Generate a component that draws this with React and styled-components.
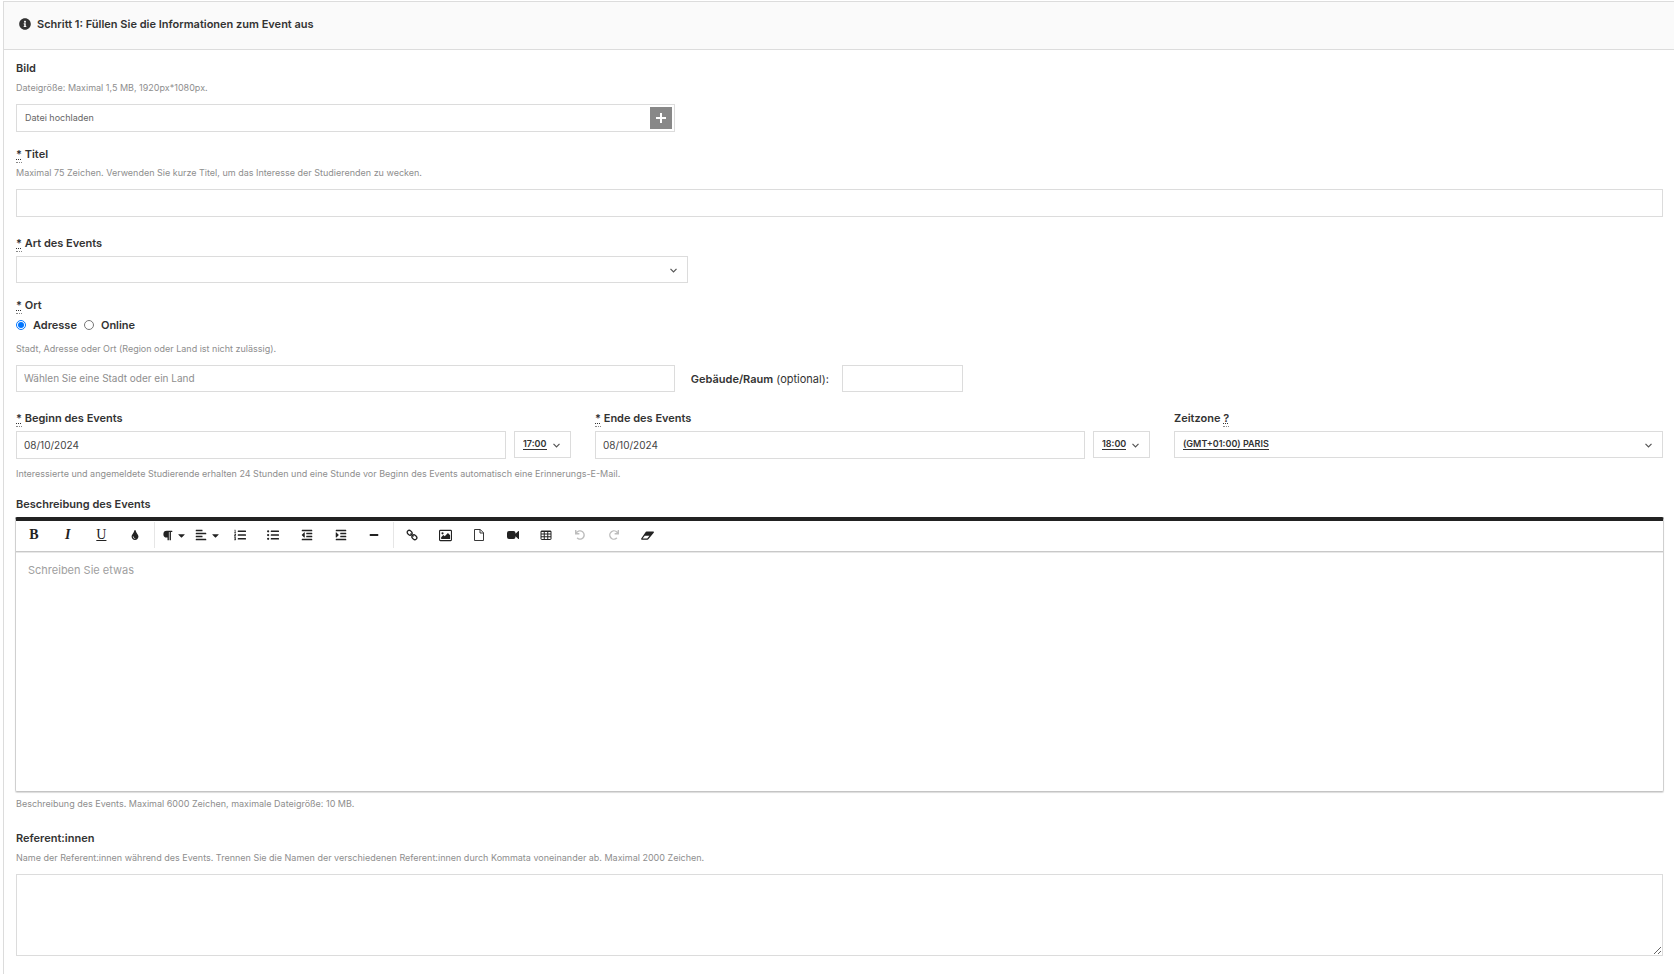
import React, { useRef, useState } from "react";
import styled, { createGlobalStyle, css } from "styled-components";
import {
  FaInfoCircle,
  FaTint,
  FaParagraph,
  FaAlignLeft,
  FaListOl,
  FaListUl,
  FaOutdent,
  FaIndent,
  FaMinus,
  FaUndo,
  FaRedo,
  FaCaretDown,
} from "react-icons/fa";

const GlobalStyle = createGlobalStyle`
  *, *::before, *::after {
    box-sizing: border-box;
  }

  body {
    margin: 0;
    background: #fff;
    color: #333;
    font-family: Inter, "Liberation Sans", sans-serif;
    font-size: 11px;
    line-height: 20px;
  }

  input, select, textarea, button {
    font-family: inherit;
    margin: 0;
  }
`;

const Panel = styled.form`
  min-height: calc(100vh - 1px);
  margin: 1px 0 0 3px;
  border: solid #dcdcdc;
  border-width: 1px 0 0 1px;
`;

const PanelHeader = styled.header`
  display: flex;
  align-items: center;
  gap: 6px;
  padding: 12px 15px 15px;
  background: #fafafa;
  border-bottom: 1px solid #dcdcdc;
`;

const PanelTitle = styled.h1`
  margin: 0;
  font-size: 11px;
  font-weight: 600;
  line-height: 20px;
`;

const PanelBody = styled.div`
  padding: 8px 11px 16px 12px;
`;

const Field = styled.div`
  min-width: 0;
  margin-bottom: ${({ $gap }) => $gap || 16}px;
`;

const labelText = css`
  display: block;
  font-size: 11px;
  font-weight: 600;
  line-height: 20px;
`;

const Label = styled.label`
  ${labelText}
  margin-bottom: ${({ $space }) => $space || 3}px;
`;

const Legend = styled.legend`
  ${labelText}
  padding: 0;
`;

const Abbr = styled.abbr`
  padding-bottom: 1px;
  border-bottom: 1px dotted #888;
  text-decoration: underline dotted 1px;
  text-underline-offset: 1px;
`;

const Hint = styled.p`
  margin: 0;
  color: #8e8e8e;
  font-size: 9px;
  line-height: 16px;
`;

const control = css`
  display: block;
  width: 100%;
  border: 1px solid #dcdcdc;
  border-radius: 0;
  background: #fff;
  color: #444;
  outline: none;

  &:focus {
    border-color: #999;
  }
`;

const TextInput = styled.input`
  ${control}
  height: ${({ $low }) => ($low ? 27 : 28)}px;
  padding: 0 7px 1px;
  font-size: 10px;

  &::placeholder {
    color: #8e8e8e;
    opacity: 1;
  }
`;

const TextArea = styled.textarea`
  ${control}
  height: 82px;
  padding: 7px;
  font-size: 10px;
  resize: vertical;
`;

const Upload = styled.div`
  position: relative;
  display: flex;
  align-items: center;
  width: 40%;
  height: 28px;
  padding: 0 2px 0 8px;
  border: 1px solid #dcdcdc;
`;

const UploadName = styled.label`
  flex: 1;
  color: #666;
  font-size: 9px;
  cursor: pointer;
`;

const FileInput = styled.input`
  position: absolute;
  width: 1px;
  height: 1px;
  opacity: 0;
  pointer-events: none;
`;

const AddButton = styled.button`
  display: flex;
  align-items: center;
  justify-content: center;
  width: 22px;
  height: 22px;
  padding: 0;
  border: 0;
  background: #888;
  color: #fff;
  cursor: pointer;
`;

const SelectBox = styled.div`
  position: relative;
  width: ${({ $width }) => $width || "100%"};
`;

// browsers skip text-decoration on a closed select, so the underline is a background
const Select = styled.select`
  ${control}
  appearance: none;
  height: 27px;
  padding: 0 18px 2px 8px;
  color: #333;
  font-size: 9px;
  font-weight: 600;
  background: linear-gradient(#333, #333) 8px 17px / ${({ $underline }) => $underline || 0}px 1px no-repeat #fff;
`;

const SelectArrow = styled.svg`
  position: absolute;
  right: 11px;
  top: 12px;
  pointer-events: none;
`;

const RadioGroup = styled.fieldset`
  margin: 0;
  padding: 0;
  border: 0;
`;

const RadioRow = styled.div`
  display: flex;
  gap: 7px;
  margin-bottom: 6px;
`;

const RadioLabel = styled.label`
  display: flex;
  align-items: center;
  gap: 7px;
  font-weight: 600;
`;

const Radio = styled.input`
  width: 10px;
  height: 10px;
  accent-color: #0075ff;
`;

const ControlRow = styled.div`
  display: flex;
  align-items: center;
  margin-top: 8px;
`;

const PlaceBox = styled.div`
  width: 40%;
  margin-right: 16px;
`;

const RoomLabel = styled.label`
  margin-right: 13px;
  font-size: 11px;

  strong {
    font-weight: 600;
  }
`;

const RoomBox = styled.div`
  width: 121px;
`;

const DateRow = styled.div`
  display: grid;
  grid-template-columns: 555fr 555fr 489fr;
  gap: 24px;
  margin-bottom: 7px;
`;

const DateTime = styled.div`
  display: grid;
  grid-template-columns: 1fr 57px;
  gap: 8px;
`;

const Editor = styled.div`
  margin: 0 -1px 4px;
  border: 1px solid #d0d0d0;
  border-top: 4px solid #222;
  border-bottom-color: #c4c4c4;
  border-radius: 2px;
  box-shadow: 0 1px 1px rgba(0, 0, 0, 0.14);
`;

const Toolbar = styled.div`
  display: flex;
  align-items: center;
  height: 31px;
  padding-bottom: 2px;
  border-bottom: 1px solid #c8c8c8;
  box-shadow: 0 1px 0 #e8e8e8;
`;

const ToolGroup = styled.div`
  display: grid;
  grid-template-columns: repeat(${({ $count }) => $count}, 1fr);
  width: ${({ $width }) => $width}px;
  margin: 0 2px 0 1px;
`;

const Divider = styled.span`
  width: 1px;
  height: 26px;
  background: #e6e6e6;
`;

const Tool = styled.button`
  display: flex;
  align-items: center;
  justify-content: center;
  gap: 3px;
  height: 28px;
  padding: 0 0 0 ${({ $menu }) => ($menu ? 4 : 0)}px;
  border: 0;
  background: none;
  color: #222;
  cursor: pointer;

  &:hover {
    background: #ebebeb;
  }

  &:disabled {
    background: none;
    color: #bdbdbd;
    cursor: default;
  }
`;

const Letter = styled.span`
  font-family: "Liberation Serif", serif;
  font-size: 14px;
  font-weight: ${({ $light }) => ($light ? 400 : 700)};
  font-style: ${({ $italic }) => ($italic ? "italic" : "normal")};
  line-height: 14px;
  text-decoration: ${({ $underline }) => ($underline ? "underline" : "none")};
`;

const EditorText = styled.textarea`
  display: block;
  width: 100%;
  height: 239px;
  padding: 10px 12px;
  border: 0;
  background: transparent;
  color: #333;
  font-size: 11px;
  line-height: 16px;
  outline: none;
  resize: none;

  &::placeholder {
    color: #a0a0a0;
    opacity: 1;
  }
`;

const LinkIcon = () => (
  <svg width="12" height="12" viewBox="0 0 24 24" fill="none" stroke="currentColor" strokeWidth="2.6">
    <rect x="2" y="3.5" width="10.5" height="8" rx="4" transform="rotate(45 7.25 7.5)" />
    <rect x="11.5" y="12.5" width="10.5" height="8" rx="4" transform="rotate(45 16.75 16.5)" />
    <path d="M9 9l6 6" />
  </svg>
);

const ImageIcon = () => (
  <svg width="13" height="13" viewBox="0 0 24 24" fill="currentColor">
    <rect x="1" y="2.5" width="22" height="19" rx="1.5" fill="none" stroke="currentColor" strokeWidth="2" />
    <circle cx="6.5" cy="8" r="2" />
    <path d="M4 18.5v-3.5l4-4 2.5 2.5 6-6 4 4v7z" />
  </svg>
);

const FileIcon = () => (
  <svg width="12" height="12" viewBox="0 0 24 24" fill="none" stroke="currentColor" strokeWidth="1.8">
    <path d="M3 1h11.5L21 7.5V23H3z" strokeLinejoin="round" />
    <path d="M14 1v7h7" />
  </svg>
);

const VideoIcon = () => (
  <svg width="12" height="12" viewBox="0 0 24 24" fill="currentColor">
    <path d="M4 4h9a4 4 0 0 1 4 4v1.5l5.2-5.2a1 1 0 0 1 1.8.8v13.8a1 1 0 0 1-1.8.8L17 14.5V16a4 4 0 0 1-4 4H4a4 4 0 0 1-4-4V8a4 4 0 0 1 4-4z" />
  </svg>
);

const TableIcon = () => (
  <svg width="12" height="12" viewBox="0 0 24 24" fill="none" stroke="currentColor" strokeWidth="2">
    <rect x="2" y="4" width="20" height="17" rx="1" />
    <path d="M2 5h20M2 10h20M2 15.5h20M8.5 4v17M15.5 4v17" />
  </svg>
);

const EraserIcon = () => (
  <svg width="13" height="13" viewBox="0 0 24 24" fill="currentColor">
    <path
      d="M10.5 4.5h12a1.3 1.3 0 0 1 1 2.2L13.5 19a2 2 0 0 1-1.5.8H1.5a1.3 1.3 0 0 1-1-2.2L9 5.2a2 2 0 0 1 1.5-.7zM11.5 17.5l4.2-5H7l-4.2 5z"
      fillRule="evenodd"
    />
  </svg>
);

const toolGroups = [
  {
    width: 135,
    tools: [
      { name: "Fett", icon: <Letter>B</Letter> },
      { name: "Kursiv", icon: <Letter $italic>I</Letter> },
      { name: "Unterstrichen", icon: <Letter $light $underline>U</Letter> },
      { name: "Farben", icon: <FaTint size={10} /> },
    ],
  },
  {
    width: 235,
    tools: [
      { name: "Absatzformat", icon: <FaParagraph size={11} />, menu: true },
      { name: "Ausrichten", icon: <FaAlignLeft size={12} />, menu: true },
      { name: "Nummerierte Liste", icon: <FaListOl size={12} /> },
      { name: "Aufzählung", icon: <FaListUl size={12} /> },
      { name: "Einzug verkleinern", icon: <FaOutdent size={12} /> },
      { name: "Einzug vergrößern", icon: <FaIndent size={12} /> },
      { name: "Horizontale Linie", icon: <FaMinus size={10} /> },
    ],
  },
  {
    width: 269,
    tools: [
      { name: "Link einfügen", icon: <LinkIcon /> },
      { name: "Bild einfügen", icon: <ImageIcon /> },
      { name: "Datei einfügen", icon: <FileIcon /> },
      { name: "Video einfügen", icon: <VideoIcon /> },
      { name: "Tabelle einfügen", icon: <TableIcon /> },
      { name: "Rückgängig", icon: <FaUndo size={10} />, disabled: true },
      { name: "Wiederholen", icon: <FaRedo size={10} />, disabled: true },
      { name: "Formatierung löschen", icon: <EraserIcon /> },
    ],
  },
];

const Required = () => <Abbr title="Pflichtfeld">*</Abbr>;

const Dropdown = ({ id, label, options, width, underline }) => (
  <SelectBox $width={width}>
    <Select id={id} aria-label={label} $underline={underline}>
      {options.map((option) => (
        <option key={option}>{option}</option>
      ))}
    </Select>
    <SelectArrow width="7" height="5" viewBox="0 0 7 5" fill="none" stroke="#555" strokeWidth="1.2">
      <path d="M0.5 0.8l3 3 3-3" />
    </SelectArrow>
  </SelectBox>
);

const DateField = ({ id, label, time }) => (
  <div>
    <Label htmlFor={id}>
      <Required /> {label}
    </Label>
    <DateTime>
      <TextInput id={id} type="text" defaultValue="08/10/2024" />
      <Dropdown label={`${label}, Uhrzeit`} options={[time]} underline={24} />
    </DateTime>
  </div>
);

const EditorToolbar = () => (
  <Toolbar>
    {toolGroups.map((group, index) => (
      <React.Fragment key={group.width}>
        {index > 0 && <Divider />}
        <ToolGroup $count={group.tools.length} $width={group.width}>
          {group.tools.map((tool) => (
            <Tool
              key={tool.name}
              type="button"
              aria-label={tool.name}
              disabled={tool.disabled}
              $menu={tool.menu}
            >
              {tool.icon}
              {tool.menu && <FaCaretDown size={11} />}
            </Tool>
          ))}
        </ToolGroup>
      </React.Fragment>
    ))}
  </Toolbar>
);

const App = () => {
  const fileRef = useRef(null);
  const [place, setPlace] = useState("address");

  return (
    <>
      <GlobalStyle />
      <Panel>
        <PanelHeader>
          <FaInfoCircle size={12} />
          <PanelTitle>Schritt 1: Füllen Sie die Informationen zum Event aus</PanelTitle>
        </PanelHeader>
        <PanelBody>
          <Field $gap={12}>
            <Label htmlFor="image" $space={2}>Bild</Label>
            <Hint>Dateigröße: Maximal 1,5 MB, 1920px*1080px.</Hint>
            <ControlRow>
              <Upload>
                <UploadName htmlFor="image">Datei hochladen</UploadName>
                <FileInput ref={fileRef} id="image" type="file" accept="image/*" />
                <AddButton type="button" aria-label="Datei auswählen" onClick={() => fileRef.current.click()}>
                  <svg width="10" height="10" viewBox="0 0 10 10" fill="currentColor">
                    <path d="M4 0h2v4h4v2H6v4H4V6H0V4h4z" />
                  </svg>
                </AddButton>
              </Upload>
            </ControlRow>
          </Field>

          <Field>
            <Label htmlFor="title" $space={1}>
              <Required /> Titel
            </Label>
            <Hint>Maximal 75 Zeichen. Verwenden Sie kurze Titel, um das Interesse der Studierenden zu wecken.</Hint>
            <ControlRow>
              <TextInput id="title" type="text" />
            </ControlRow>
          </Field>

          <Field $gap={12}>
            <Label htmlFor="type">
              <Required /> Art des Events
            </Label>
            <Dropdown id="type" options={[""]} width="calc(40% + 13px)" />
          </Field>

          <Field>
            <RadioGroup>
              <Legend>
                <Required /> Ort
              </Legend>
              <RadioRow>
                <RadioLabel>
                  <Radio
                    type="radio"
                    name="place"
                    checked={place === "address"}
                    onChange={() => setPlace("address")}
                  />
                  Adresse
                </RadioLabel>
                <RadioLabel>
                  <Radio
                    type="radio"
                    name="place"
                    checked={place === "online"}
                    onChange={() => setPlace("online")}
                  />
                  Online
                </RadioLabel>
              </RadioRow>
            </RadioGroup>
            <Hint>Stadt, Adresse oder Ort (Region oder Land ist nicht zulässig).</Hint>
            <ControlRow>
              <PlaceBox>
                <TextInput
                  type="text"
                  $low
                  aria-label="Stadt oder Land"
                  placeholder="Wählen Sie eine Stadt oder ein Land"
                />
              </PlaceBox>
              <RoomLabel htmlFor="room">
                <strong>Gebäude/Raum</strong> (optional):
              </RoomLabel>
              <RoomBox>
                <TextInput id="room" type="text" $low />
              </RoomBox>
            </ControlRow>
          </Field>

          <Field $gap={12}>
            <DateRow>
              <DateField id="start" label="Beginn des Events" time="17:00" />
              <DateField id="end" label="Ende des Events" time="18:00" />
              <div>
                <Label htmlFor="timezone">
                  Zeitzone <Abbr title="Zeitzone des Events">?</Abbr>
                </Label>
                <Dropdown id="timezone" options={["(GMT+01:00) PARIS"]} underline={86} />
              </div>
            </DateRow>
            <Hint>
              Interessierte und angemeldete Studierende erhalten 24 Stunden und eine Stunde vor Beginn des Events
              automatisch eine Erinnerungs-E-Mail.
            </Hint>
          </Field>

          <Field>
            <Label htmlFor="description">Beschreibung des Events</Label>
            <Editor>
              <EditorToolbar />
              <EditorText id="description" placeholder="Schreiben Sie etwas" />
            </Editor>
            <Hint>Beschreibung des Events. Maximal 6000 Zeichen, maximale Dateigröße: 10 MB.</Hint>
          </Field>

          <Field>
            <Label htmlFor="speakers" $space={2}>Referent:innen</Label>
            <Hint>
              Name der Referent:innen während des Events. Trennen Sie die Namen der verschiedenen Referent:innen durch
              Kommata voneinander ab. Maximal 2000 Zeichen.
            </Hint>
            <ControlRow>
              <TextArea id="speakers" />
            </ControlRow>
          </Field>
        </PanelBody>
      </Panel>
    </>
  );
};

export default App;
